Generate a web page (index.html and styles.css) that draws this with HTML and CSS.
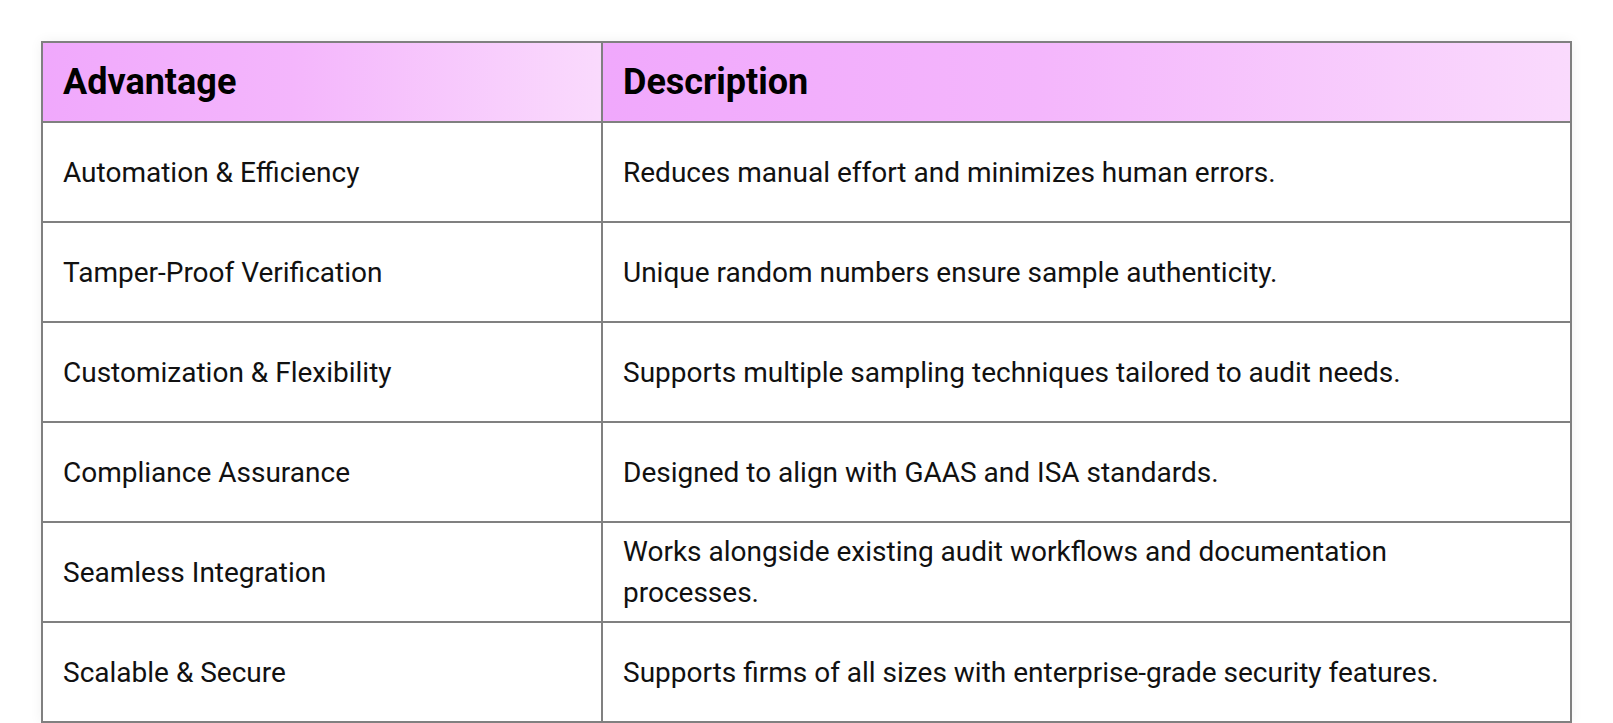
FILE: index.html
```html
<!DOCTYPE html>
<html lang="en">
<head>
<meta charset="utf-8">
<title>Advantages</title>
<link rel="stylesheet" href="styles.css">
</head>
<body>
<div class="wrap">
  <table class="adv-table">
    <colgroup>
      <col class="col-adv">
      <col class="col-desc">
    </colgroup>
    <thead>
      <tr>
        <th>Advantage</th>
        <th>Description</th>
      </tr>
    </thead>
    <tbody>
      <tr>
        <td>Automation &amp; Efficiency</td>
        <td>Reduces manual effort and minimizes human errors.</td>
      </tr>
      <tr>
        <td>Tamper-Proof Verification</td>
        <td>Unique random numbers ensure sample authenticity.</td>
      </tr>
      <tr>
        <td>Customization &amp; Flexibility</td>
        <td>Supports multiple sampling techniques tailored to audit needs.</td>
      </tr>
      <tr>
        <td>Compliance Assurance</td>
        <td>Designed to align with GAAS and ISA standards.</td>
      </tr>
      <tr>
        <td>Seamless Integration</td>
        <td>Works alongside existing audit workflows and documentation processes.</td>
      </tr>
      <tr>
        <td>Scalable &amp; Secure</td>
        <td>Supports firms of all sizes with enterprise-grade security features.</td>
      </tr>
    </tbody>
  </table>
</div>
</body>
</html>
```

FILE: styles.css
```css
html, body {
  margin: 0;
  padding: 0;
  background: #ffffff;
}

body {
  font-family: Roboto, "Liberation Sans", Arial, sans-serif;
  color: #111111;
}

.wrap {
  padding: 41px 41px 0 41px;
}

.adv-table {
  width: 100%;
  border-collapse: collapse;
  table-layout: fixed;
  box-shadow: 0 0 12px rgba(0, 0, 0, 0.06);
}

.col-adv {
  width: 560px;
}

.adv-table th,
.adv-table td {
  border: 2px solid #808080;
  text-align: left;
  vertical-align: middle;
  padding: 0 60px 0 20px;
}

.adv-table th {
  height: 78px;
  font-size: 36px;
  font-weight: 700;
  color: #000000;
  background: linear-gradient(90deg, #f0a8fc 0%, #f4b6fc 45%, #fadafd 100%);
}

.adv-table td {
  height: 98px;
  font-size: 28px;
  line-height: 41px;
  color: #111111;
}
```
